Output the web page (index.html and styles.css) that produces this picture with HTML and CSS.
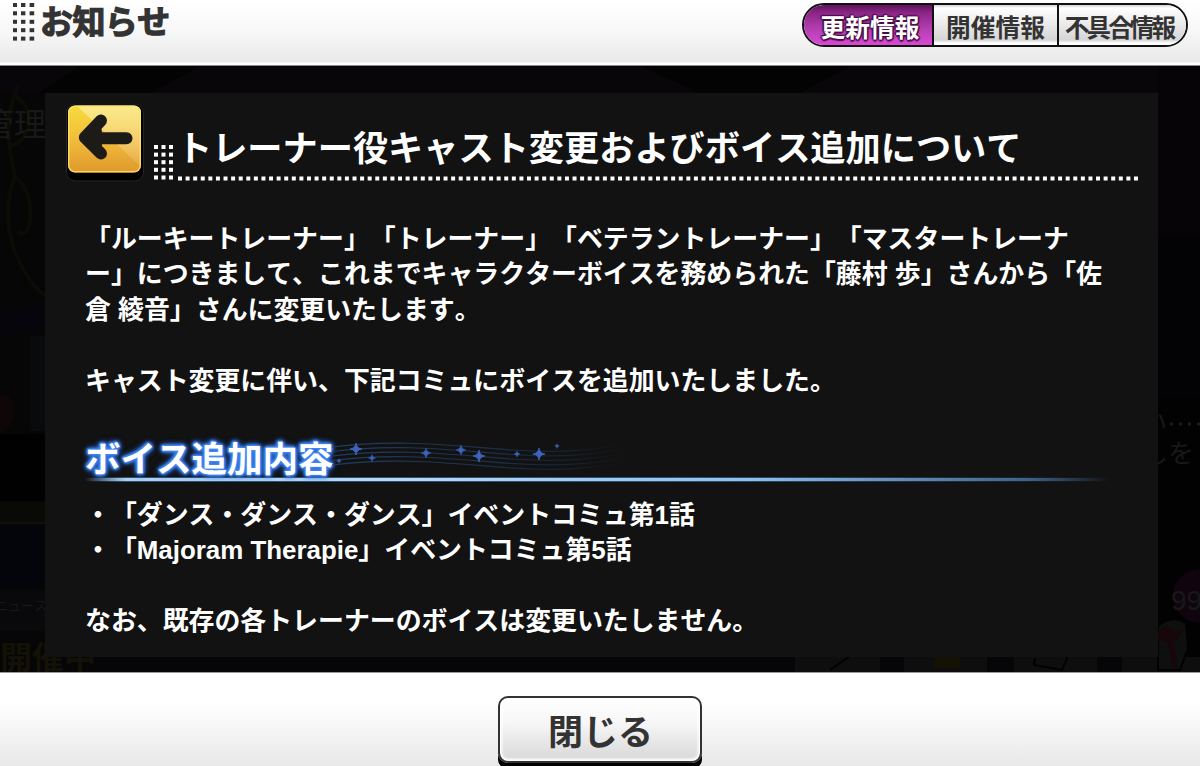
FILE: index.html
```html
<!DOCTYPE html>
<html lang="ja">
<head>
<meta charset="utf-8">
<title>お知らせ</title>
<link rel="stylesheet" href="styles.css">
</head>
<body>
<div class="screen">
  <header class="topbar">
    <div class="brand">
      <svg class="brand-dots" width="23" height="40" viewBox="0 0 23 40" fill="#333">
        <defs><g id="dotrow"><rect width="4" height="4"/><rect x="8" width="4.4" height="4"/><rect x="16.6" width="4.6" height="4"/></g></defs>
        <use href="#dotrow" y="0"/><use href="#dotrow" y="8.3"/><use href="#dotrow" y="16.8"/><use href="#dotrow" y="25.2"/><use href="#dotrow" y="33.6"/>
      </svg>
      <h1 class="brand-title">お知らせ</h1>
    </div>
    <nav class="tabs">
      <a class="tab tab-active">更新情報</a>
      <a class="tab tab-mid">開催情報</a>
      <a class="tab tab-last">不具合情報</a>
    </nav>
  </header>

  <main class="stage">
    <svg class="backdrop" width="1200" height="606" viewBox="0 0 1200 606">
      <defs>
        <linearGradient id="bg" x1="0" x2="1" y2="0"><stop offset="0" stop-color="#070606"/><stop offset=".5" stop-color="#030303"/><stop offset="1" stop-color="#060409"/></linearGradient>
      </defs>
      <rect width="1200" height="606" fill="url(#bg)"/>
      <path d="M0 0H1200V27H0Z" fill="#080608"/>
      <path d="M80 0H200L150 27H40ZM640 0L700 27H800L850 0Z" fill="#040304"/>
      <g fill="none" stroke="#0d0b05" stroke-width="4"><path d="M18 20C4 50 8 80 15 110C-4 160 20 210 45 230M12 80C35 70 34 40 15 30M15 110C40 130 30 180 18 165"/></g>
      <path d="M0 246L45 238V262L0 270Z" fill="#06050c"/>
      <path d="M0 330C18 325 20 360 0 368Z" fill="#0e0607"/>
      <path d="M30 270h15v95H30z" fill="#090a0c"/>
      <path d="M0 368H45V435H0Z" fill="#010101"/>
      <path d="M0 436H45V458H0Z" fill="#090906"/>
      <path d="M0 456h45v2H0z" fill="#101010"/>
      <path d="M0 460H45V522H0Z" fill="#04050b"/>
      <path d="M0 524H45V565H0Z" fill="#09090b"/>
      <path d="M1158 0H1200V170H1158Z" fill="#070408"/>
      <path d="M1158 170H1200V330H1158Z" fill="#030306"/>
      <path d="M1158 330H1200V606H1158Z" fill="#020202"/>
      <circle cx="1200" cy="530" r="27" fill="#10050f"/>
      <path d="M0 591H1200V606H0Z" fill="#060507"/>
      <path d="M795 591H880V606H795ZM904 591H987V606H904ZM1014 591H1097V606H1014ZM1122 591H1200V606H1122Z" fill="#0e0e0e"/>
      <g fill="none" stroke="#020202" stroke-width="2"><path d="M830 604L850 590M1035 592L1034 599L1062 604L1068 590"/></g>
      <path d="M934 590h26v12h-26z" fill="#141204"/>
      <path d="M1158 560Q1172 548 1186 557L1188 582L1180 604H1158Z" fill="#0e100f" stroke="#020202" stroke-width="2"/>
      <path d="M1158 566Q1167 556 1174 566L1184 563L1174 577L1178 602H1172L1169 578L1158 573Z" fill="#17060a"/>
      <g class="ghost">
        <text x="-18" y="70" font-size="32">管理</text>
        <text x="1141" y="366" font-size="26">い</text>
        <text x="1142" y="397" font-size="26">しをし</text>
        <text x="1171" y="544" font-size="28">99</text>
        <text x="-5" y="544" font-size="13">ニュース</text>
        <text class="gold" x="0" y="603" font-size="32">開催中</text>
      </g>
      <path d="M1170 358H1200" stroke="#1b1b1b" stroke-width="3" stroke-dasharray="3 6"/>
    </svg>

    <article class="panel">
      <div class="headline">
        <a class="back" aria-label="戻る">
          <svg width="78" height="78" viewBox="0 0 78 78">
            <defs>
              <linearGradient id="gold" x2="0" y2="1"><stop offset="0" stop-color="#f6dc3b"/><stop offset=".5" stop-color="#f3bd3c"/><stop offset="1" stop-color="#df982d"/></linearGradient>
              <linearGradient id="shine" x2="0" y2="1"><stop offset="0" stop-color="#fff" stop-opacity=".42"/><stop offset="1" stop-color="#fff" stop-opacity=".1"/></linearGradient>
              <clipPath id="face"><rect x="2" y="1.500" width="73" height="67" rx="7"/></clipPath>
            </defs>
            <rect x=".5" y="0" width="77" height="77" rx="9" fill="#000" stroke="#252525"/>
            <rect x="2" y="1.500" width="73" height="67" rx="7" fill="url(#gold)"/>
            <path clip-path="url(#face)" d="M10 1H76V64L10 1Z" fill="url(#shine)"/>
            <rect x="2.700" y="2.200" width="71.600" height="65.600" rx="6.500" fill="none" stroke="#ffe36a" stroke-width="1.400" stroke-opacity=".8"/>
            <path d="M60.500 34.300H23M35 16.500L18.800 33.500L35 49.500" fill="none" stroke="#1c1b18" stroke-width="12" stroke-linecap="round" stroke-linejoin="round"/>
            <path d="M18 28V40L34 49L36 41V28L34 18Z" fill="#1c1b18"/>
          </svg>
        </a>
        <svg class="mark" width="20" height="36" viewBox="0 0 20 36" fill="#fff">
          <defs><g id="mk"><rect width="4" height="4"/><rect x="7.500" width="4" height="4"/><rect x="15" width="4" height="4"/></g></defs>
          <use href="#mk" y="0"/><use href="#mk" y="7.600"/><use href="#mk" y="15.200"/><use href="#mk" y="22.800"/><use href="#mk" y="30.500"/>
        </svg>
        <div class="headline-main">
          <h2 class="headline-title">トレーナー役キャスト変更およびボイス追加について</h2>
          <svg class="rule" width="962" height="5"><path d="M0 2.500H961" stroke="#fff" stroke-width="4.200" stroke-dasharray="4 3.587"/></svg>
        </div>
      </div>

      <div class="body">
        <p>「ルーキートレーナー」「トレーナー」「ベテラントレーナー」「マスタートレーナ<br>ー」につきまして、これまでキャラクターボイスを務められた「藤村 歩」さんから「佐<br>倉 綾音」さんに変更いたします。</p>
        <p>キャスト変更に伴い、下記コミュにボイスを追加いたしました。</p>
        <h3 class="subhead">
          <span class="subhead-text">ボイス追加内容</span>
          <svg class="staff" width="300" height="40" viewBox="0 0 300 40">
            <defs>
              <linearGradient id="fade" gradientUnits="userSpaceOnUse" x1="0" y1="0" x2="292" y2="0"><stop offset="0" stop-color="#213d63"/><stop offset=".65" stop-color="#1b2d45"/><stop offset="1" stop-color="#121212"/></linearGradient>
              <path id="star" d="M0-6Q.7-.7 6 0Q.7.7 0 6Q-.7.7-6 0Q-.7-.7 0-6Z"/>
              <path id="wave" d="M0 0C70-9 130 0 180 3S250 4 290-2"/>
            </defs>
            <g fill="none" stroke="url(#fade)" stroke-width="1.200">
              <use href="#wave" y="8"/><use href="#wave" y="12.500"/><use href="#wave" y="17"/><use href="#wave" y="21.500"/><use href="#wave" y="26"/>
            </g>
            <g fill="#3d63bd" stroke="#3d63bd" stroke-width=".8">
              <use href="#star" x="24" y="10"/><use href="#star" transform="translate(40 19) scale(.6)"/><use href="#star" transform="translate(7 22) scale(.4)"/>
              <use href="#star" transform="translate(94 14) scale(.8)"/><use href="#star" transform="translate(129 11) scale(.8)"/><use href="#star" x="147" y="17"/>
              <use href="#star" transform="translate(185 15) scale(.5)"/><use href="#star" transform="translate(207 15)"/><use href="#star" transform="translate(225 7) scale(.4)"/>
            </g>
          </svg>
        </h3>
        <p class="list">・「ダンス・ダンス・ダンス」イベントコミュ第1話<br>・「Majoram Therapie」イベントコミュ第5話</p>
        <p>なお、既存の各トレーナーのボイスは変更いたしません。</p>
      </div>
    </article>
  </main>

  <footer class="bottombar">
    <button class="close">閉じる</button>
  </footer>
</div>
</body>
</html>
```
FILE: styles.css
```css
* { box-sizing: border-box; }

body {
  margin: 0;
  font-family: "Liberation Sans", "Noto Sans CJK JP", sans-serif;
  font-weight: 700;
  text-spacing-trim: space-all;
  font-kerning: none;
}

h1, h2, h3, p { margin: 0; }

.screen {
  width: 1200px;
  height: 766px;
  display: flex;
  flex-direction: column;
  overflow: hidden;
  background: #000;
}

.topbar {
  flex: 0 0 66px;
  display: flex;
  justify-content: space-between;
  align-items: flex-start;
  padding: 3px 12px 0 13px;
  background: linear-gradient(#fff 0, #f8f8f8 30px, #e9e9e9 62px, #fff 63px, #fff 65px, #8b8b8b 65px);
}

.brand { display: flex; gap: 4px; }

.brand-title {
  font-size: 33px;
  line-height: 39px;
  letter-spacing: -0.6px;
  color: #333;
  -webkit-text-stroke: 1.2px #333;
}

.tabs {
  display: flex;
  width: 386px;
  height: 44px;
  border: 2px solid #111;
  border-radius: 22px;
  overflow: hidden;
  background: #fff;
}

.tab {
  display: flex;
  justify-content: center;
  align-items: center;
  font-size: 24.700px;
  line-height: 30px;
  white-space: nowrap;
  color: #333;
  padding-top: 7px;
  background: linear-gradient(#d2d2d2 0, #fff 3px, #f6f6f6 10px, #d5d5d5 35px, #fff 38px);
}

.tab-active {
  width: 128px;
  padding-left: 4px;
  color: #fff;
  background: linear-gradient(#5d1459 0, #8d2588 8px, #b33fb0 24px, #d548d0 38px);
  text-shadow: 1.500px 0 1px #4b1048, -1.500px 0 1px #4b1048, 0 1.500px 1px #4b1048, 0 -1.500px 1px #4b1048, 1px 1px 1px #4b1048, -1px -1px 1px #4b1048;
}

.tab-mid { width: 125px; border-left: 2px solid #111; }

.tab-last {
  width: 129px;
  padding-right: 7px;
  letter-spacing: -3px;
  border-left: 2px solid #111;
}

.stage {
  position: relative;
  flex: 0 0 606px;
  padding: 27px 42px 15px 45px;
}

.backdrop { position: absolute; inset: 0; }

.ghost { fill: #181818; font-weight: 400; }
.ghost .gold { fill: #141106; font-weight: 700; }

.panel {
  position: relative;
  width: 1113px;
  height: 564px;
  padding: 11px 0 0 21px;
  background: #121212;
}

.headline { display: flex; align-items: flex-start; }

.back, .back svg { display: block; }

.mark { margin: 41px 0 0 10px; }

.headline-main { margin-left: 3px; }

.headline-title {
  height: 72px;
  padding-top: 20px;
  font-size: 35.200px;
  line-height: 50px;
  white-space: nowrap;
  color: #fff;
}

.rule { display: block; margin-left: 1px; }

.body {
  margin-top: 40px;
  padding-left: 19px;
  font-size: 25.900px;
  line-height: 35.400px;
  color: #fff;
  white-space: nowrap;
}

.body p + p { margin-top: 35.400px; }

.subhead {
  display: flex;
  align-items: flex-start;
  width: 1024px;
  height: 50px;
  margin-top: 36px;
  padding-bottom: 5px;
  font-size: 35.500px;
  line-height: 50px;
  background:
    linear-gradient(90deg, transparent 0, #a9d0f3 4%, #b5d9fa 30%, #8dc0ee 65%, #3d638a 92%, transparent) 0 43px / 100% 3px no-repeat,
    linear-gradient(90deg, transparent 0, #2f4f6c 4%, #2f4f6c 60%, transparent) 0 42px / 100% 5px no-repeat;
}

.subhead-text {
  color: #fff;
  text-shadow: 0 0 2px #4a8cf5, 0 0 3px #4a8cf5, 0 0 4px #3b7ff0, 0 0 4px #3b7ff0, 0 0 6px #2f70e4, 0 0 7px #2f70e4, 1px 1px 2px #4a8cf5, -1px -1px 2px #4a8cf5;
}

.staff { flex: none; margin: 4px 0 0 -2px; }

.list { margin-top: 13px; }

.bottombar {
  flex: 0 0 94px;
  display: flex;
  justify-content: center;
  padding-top: 23px;
  border-top: 1px solid #999;
  background: linear-gradient(#fff 30px, #e8e8e8);
}

.close {
  width: 204px;
  height: 67px;
  padding: 0 0 0 1px;
  border: 2px solid #333;
  border-radius: 10px;
  background: linear-gradient(#fff 0, #f6f6f6 25px, #dadada 60px, #fff 64px);
  box-shadow: inset 0 0 3px 2px #fff, 0 6px 0 #000;
  font: 700 35px/60px "Noto Sans CJK JP", sans-serif;
  color: #333;
}
```
